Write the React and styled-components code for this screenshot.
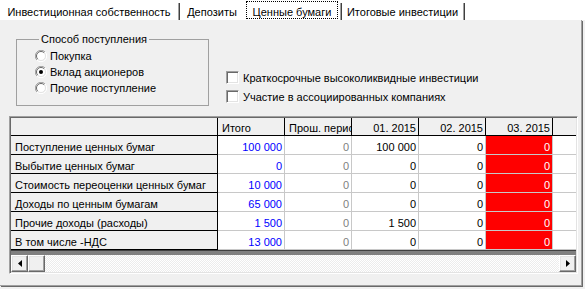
import React from 'react'
import styled, { createGlobalStyle } from 'styled-components'

const GlobalStyle = createGlobalStyle`
  html, body {
    margin: 0;
    padding: 0;
    background: #f0f0f0;
  }
  body {
    font-family: "Liberation Sans", Arial, sans-serif;
    font-size: 11px;
    color: #000;
  }
`

const Window = styled.div`
  width: 585px;
  height: 289px;
  display: flex;
  flex-direction: column;
  overflow: hidden;
  background: #f0f0f0;
`

const TabStrip = styled.div`
  height: 20px;
  display: flex;
  background: #fff;
`

const Tab = styled.div`
  width: ${p => p.$w}px;
  height: 20px;
  box-sizing: border-box;
  padding: ${p => (p.$active ? '1px 2px 1px' : '6px 0 0')};
  text-align: center;
  line-height: 13px;
  white-space: nowrap;
`

const Focus = styled.div`
  height: 18px;
  box-sizing: border-box;
  outline: 1px dotted #000;
  outline-offset: -1px;
  padding-top: 5px;
  line-height: 13px;
`

const Sep = styled.div`
  width: 2px;
  height: 17px;
  margin-top: 3px;
  background: linear-gradient(to right, #a0a0a0 50%, #404040 50%);
`

const Panel = styled.div`
  width: 582px;
  height: 266px;
  box-sizing: border-box;
  border-right: 1px solid #a0a0a0;
  border-bottom: 1px solid #a0a0a0;
  box-shadow: 1px 1px 0 #696969;
  padding: 13px 0 0 9px;
`

const TopArea = styled.div`
  display: flex;
  padding-left: 7px;
  margin-bottom: 10px;
`

const GroupBox = styled.fieldset`
  width: 193px;
  box-sizing: border-box;
  margin: 0;
  padding: 2px 0 6px 18px;
  border: 1px solid #a0a0a0;
`

const Legend = styled.legend`
  margin-left: 4px;
  padding: 0 2px;
  line-height: 13px;
`

const OptionRow = styled.label`
  display: flex;
  align-items: center;
  gap: 3px;
  height: ${p => p.$h}px;
  white-space: nowrap;
`

const CheckColumn = styled.div`
  margin: 35px 0 0 17px;
`

const CheckBox = styled.span`
  width: 13px;
  height: 13px;
  box-sizing: border-box;
  border: 1px solid;
  border-color: #a0a0a0 #fff #fff #a0a0a0;
  box-shadow: inset 1px 1px 0 #696969, inset -1px -1px 0 #e3e3e3;
  background: #fff;
  margin-right: 1px;
`

const GridFrame = styled.div`
  width: 569px;
  height: 158px;
  box-sizing: border-box;
  border: 1px solid;
  border-color: #a0a0a0 #fff #fff #a0a0a0;
  padding: 1px;
  box-shadow: inset 1px 1px 0 #696969, inset -1px -1px 0 #e3e3e3;
  display: flex;
  flex-direction: column;
`

const Grid = styled.div`
  display: grid;
  grid-template-columns: 207px repeat(5, 67px) 23px;
  grid-template-rows: 18px repeat(6, 19px);
  background: #fff;
`

const Cell = styled.div`
  box-sizing: border-box;
  overflow: hidden;
  white-space: nowrap;
  padding: ${p => (p.$head ? '3px' : '3px')} 2px 0 4px;
  line-height: ${p => (p.$head ? 14 : 16)}px;
  text-align: ${p => p.$align || 'left'};
  color: ${p => p.$color || '#000'};
  background: ${p => p.$bg || (p.$fixed ? '#f0f0f0' : '#fff')};
  border-bottom: 1px solid ${p => (p.$fixed || p.$head ? '#000' : '#c8c8c8')};
  border-right: ${p => (p.$last ? 'none' : `1px solid ${p.$fixed ? '#000' : '#c8c8c8'}`)};
`

const Band = styled.div`
  height: 5px;
  box-sizing: border-box;
  border-top: 1px solid #404040;
  background: #808080;
`

const ScrollBar = styled.div`
  height: 17px;
  display: flex;
`

const ScrollButton = styled.div`
  width: 17px;
  height: 17px;
  box-sizing: border-box;
  border: 1px solid;
  border-color: #fff #696969 #696969 #fff;
  box-shadow: inset -1px -1px 0 #a0a0a0, inset 1px 1px 0 #e3e3e3;
  background: #f0f0f0;
  display: flex;
  align-items: center;
  justify-content: center;
`

const Track = styled.div`
  flex: 1;
  background-color: #fff;
  background-image: repeating-conic-gradient(#ececec 0 25%, #fff 0 50%);
  background-size: 2px 2px;
`

const Radio = ({ checked }) => (
  <svg width="12" height="12" viewBox="0 0 12 12">
    <path d="M1.9 10.1 A5.8 5.8 0 0 1 10.1 1.9" stroke="#a0a0a0" fill="none" />
    <path d="M10.1 1.9 A5.8 5.8 0 0 1 1.9 10.1" stroke="#fff" fill="none" />
    <circle cx="6" cy="6" r="4.5" fill="#fff" />
    <path d="M2.8 9.2 A4.5 4.5 0 0 1 9.2 2.8" stroke="#696969" fill="none" />
    <path d="M9.2 2.8 A4.5 4.5 0 0 1 2.8 9.2" stroke="#e3e3e3" fill="none" />
    {checked && <circle cx="6" cy="6" r="2" fill="#000" />}
  </svg>
)

const Arrow = ({ dir }) => (
  <svg width="4" height="7" viewBox="0 0 4 7">
    <polygon points={dir === 'left' ? '4,0 4,7 0,3.5' : '0,0 0,7 4,3.5'} fill="#000" />
  </svg>
)

const months = ['01. 2015', '02. 2015', '03. 2015']

const rows = [
  ['Поступление ценных бумаг', '100 000', '0', '100 000', '0', '0'],
  ['Выбытие ценных бумаг', '0', '0', '0', '0', '0'],
  ['Стоимость переоценки ценных бумаг', '10 000', '0', '0', '0', '0'],
  ['Доходы по ценным бумагам', '65 000', '0', '0', '0', '0'],
  ['Прочие доходы (расходы)', '1 500', '0', '1 500', '0', '0'],
  ['В том числе -НДС', '13 000', '0', '0', '0', '0'],
]

export default function App() {
  return (
    <Window>
      <GlobalStyle />
      <TabStrip>
        <Tab $w={178}>Инвестиционная собственность</Tab>
        <Sep />
        <Tab $w={64}>Депозиты</Tab>
        <Tab $w={96} $active>
          <Focus>Ценные бумаги</Focus>
        </Tab>
        <Sep />
        <Tab $w={121}>Итоговые инвестиции</Tab>
        <Sep />
      </TabStrip>
      <Panel>
        <TopArea>
          <GroupBox>
            <Legend>Способ поступления</Legend>
            <OptionRow $h={16}><Radio />Покупка</OptionRow>
            <OptionRow $h={16}><Radio checked />Вклад акционеров</OptionRow>
            <OptionRow $h={16}><Radio />Прочие поступление</OptionRow>
          </GroupBox>
          <CheckColumn>
            <OptionRow $h={19}><CheckBox />Краткосрочные высоколиквидные инвестиции</OptionRow>
            <OptionRow $h={19}><CheckBox />Участие в ассоциированных компаниях</OptionRow>
          </CheckColumn>
        </TopArea>
        <GridFrame>
          <Grid>
            <Cell $fixed $head />
            <Cell $fixed $head>Итого</Cell>
            <Cell $fixed $head>Прош. период</Cell>
            {months.map(m => (
              <Cell key={m} $fixed $head $align="right">{m}</Cell>
            ))}
            <Cell $fixed $head $last />
            {rows.map(r => (
              <React.Fragment key={r[0]}>
                <Cell $fixed>{r[0]}</Cell>
                <Cell $align="right" $color="#0000ff">{r[1]}</Cell>
                <Cell $align="right" $color="#808080">{r[2]}</Cell>
                <Cell $align="right">{r[3]}</Cell>
                <Cell $align="right">{r[4]}</Cell>
                <Cell $align="right" $color="#fff" $bg="#ff0000">{r[5]}</Cell>
                <Cell $last />
              </React.Fragment>
            ))}
          </Grid>
          <Band />
          <ScrollBar>
            <ScrollButton><Arrow dir="left" /></ScrollButton>
            <ScrollButton />
            <Track />
            <ScrollButton><Arrow dir="right" /></ScrollButton>
          </ScrollBar>
        </GridFrame>
      </Panel>
    </Window>
  )
}
